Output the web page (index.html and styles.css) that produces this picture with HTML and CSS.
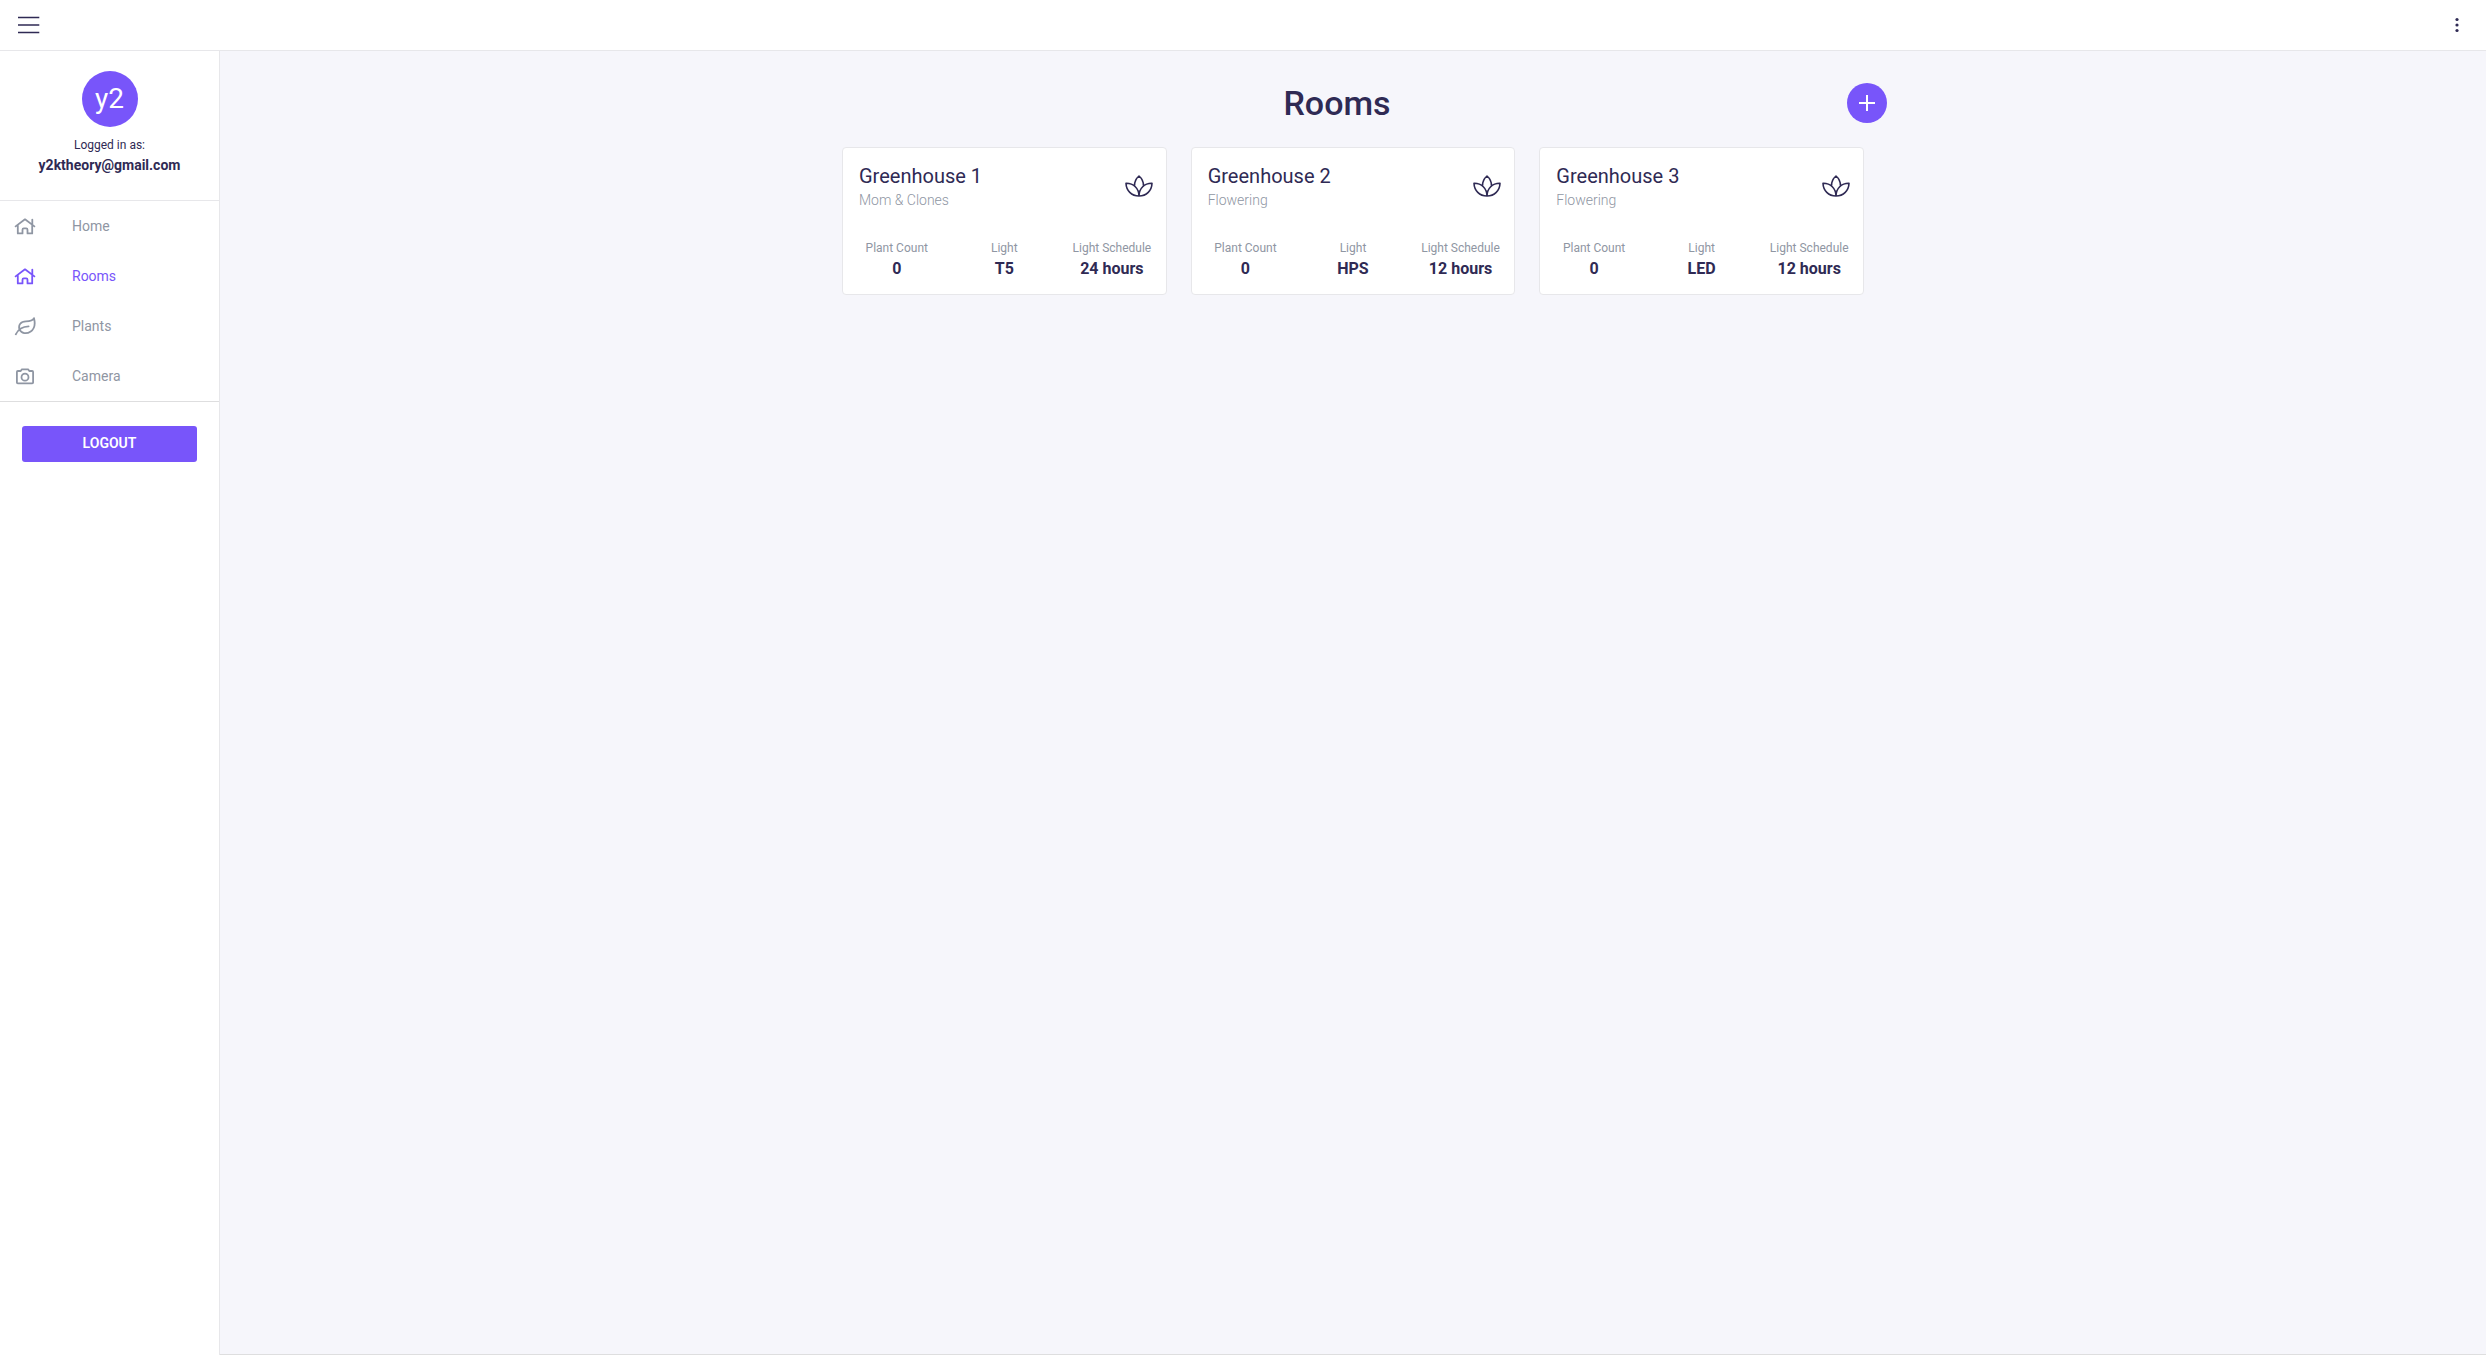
FILE: index.html
```html
<!DOCTYPE html>
<html lang="en">
<head>
<meta charset="utf-8">
<meta name="viewport" content="width=device-width, initial-scale=1">
<title>Rooms</title>
<link rel="stylesheet" href="styles.css">
</head>
<body>
<svg class="sprite" aria-hidden="true">
  <symbol id="home" viewBox="0 0 24 24">
    <path d="M2.600 12.400 12 5.300l9.400 7.100M4.800 11.200v8.200h4.700v-3.600c0-.9.500-1.400 1.300-1.400h2.400c.8 0 1.300.5 1.300 1.400v3.600h4.700v-8.200M19.300 5.600v5"/>
  </symbol>
  <symbol id="leaf" viewBox="0 0 24 24">
    <path d="M2.800 20.300C5 15.600 8.600 12.500 15.600 12.300M6.400 15.300C5.200 11 7.600 7.400 13 7.400c3.800 0 6.600-.4 8-3.300 1.600 6.400.5 10.700-3.300 13.300-4.200 2.900-9.300 2.100-11.300-2.100z"/>
  </symbol>
  <symbol id="camera" viewBox="0 0 24 24">
    <path d="M4.800 7h2.900l1.200-1.700h6.200L16.300 7h2.900q.9 0 .9.900v10.600q0 .9-.9.900H4.800q-.9 0-.9-.9V7.900q0-.9.900-.9z"/>
    <circle cx="12" cy="13.200" r="3.500"/>
  </symbol>
  <symbol id="lotus" viewBox="0 0 28 22">
    <path d="M9.600 10.600C9.500 6.700 11.300 3.300 14 1c2.700 2.300 4.500 5.700 4.400 9.600M1 8.300C1.200 15.600 6.500 21 14 21 14 13.500 8.500 8.100 1 8.300zM27 8.300C26.800 15.600 21.500 21 14 21 14 13.500 19.500 8.100 27 8.300z"/>
  </symbol>
</svg>

<header class="topbar">
  <button class="icon-button" type="button" aria-label="Toggle menu">
    <svg class="menu-icon" viewBox="0 0 22 18"><path d="M0 1.500h21.300M0 9h21.300M0 16.500h21.300"/></svg>
  </button>
  <button class="icon-button" type="button" aria-label="More options">
    <svg class="dots-icon" viewBox="0 0 4 16"><circle cx="2" cy="2.500" r="1.600"/><circle cx="2" cy="8" r="1.600"/><circle cx="2" cy="13.500" r="1.600"/></svg>
  </button>
</header>

<div class="shell">
  <aside class="sidebar">
    <div class="profile">
      <div class="avatar">y2</div>
      <p class="profile-label">Logged in as:</p>
      <p class="profile-email">y2ktheory@gmail.com</p>
    </div>
    <nav class="nav">
      <a class="nav-link" href="#home"><svg class="nav-icon"><use href="#home"/></svg>Home</a>
      <a class="nav-link active" href="#rooms" aria-current="page"><svg class="nav-icon"><use href="#home"/></svg>Rooms</a>
      <a class="nav-link" href="#plants"><svg class="nav-icon"><use href="#leaf"/></svg>Plants</a>
      <a class="nav-link" href="#camera"><svg class="nav-icon"><use href="#camera"/></svg>Camera</a>
    </nav>
    <button class="logout" type="button">LOGOUT</button>
  </aside>

  <main class="main">
    <div class="content">
      <div class="title-row">
        <h1 class="title">Rooms</h1>
        <button class="add" type="button" aria-label="Add room">
          <svg class="add-icon" viewBox="0 0 16 16"><path d="M8 0v16M0 8h16"/></svg>
        </button>
      </div>
      <div class="cards">
        <article class="card">
          <div class="card-head">
            <div><h2 class="card-title">Greenhouse 1</h2><p class="card-stage">Mom &amp; Clones</p></div>
            <svg class="lotus"><use href="#lotus"/></svg>
          </div>
          <dl class="stats">
            <div class="stat"><dt>Plant Count</dt><dd>0</dd></div>
            <div class="stat"><dt>Light</dt><dd>T5</dd></div>
            <div class="stat"><dt>Light Schedule</dt><dd>24 hours</dd></div>
          </dl>
        </article>
        <article class="card">
          <div class="card-head">
            <div><h2 class="card-title">Greenhouse 2</h2><p class="card-stage">Flowering</p></div>
            <svg class="lotus"><use href="#lotus"/></svg>
          </div>
          <dl class="stats">
            <div class="stat"><dt>Plant Count</dt><dd>0</dd></div>
            <div class="stat"><dt>Light</dt><dd>HPS</dd></div>
            <div class="stat"><dt>Light Schedule</dt><dd>12 hours</dd></div>
          </dl>
        </article>
        <article class="card">
          <div class="card-head">
            <div><h2 class="card-title">Greenhouse 3</h2><p class="card-stage">Flowering</p></div>
            <svg class="lotus"><use href="#lotus"/></svg>
          </div>
          <dl class="stats">
            <div class="stat"><dt>Plant Count</dt><dd>0</dd></div>
            <div class="stat"><dt>Light</dt><dd>LED</dd></div>
            <div class="stat"><dt>Light Schedule</dt><dd>12 hours</dd></div>
          </dl>
        </article>
      </div>
    </div>
  </main>
</div>
</body>
</html>
```
FILE: styles.css
```css
:root {
  --ink: #2f2a54;
  --muted: #8f96a3;
  --accent: #7855fa;
  --line: #e7e7ea;
  --canvas: #f6f6fb;
}

* { box-sizing: border-box; }

body {
  margin: 0;
  min-height: 100vh;
  display: flex;
  flex-direction: column;
  background: #fff;
  color: var(--ink);
  font-family: Roboto, "Liberation Sans", sans-serif;
  font-size: 14px;
  line-height: 20px;
}

h1, h2, p, dl, dd { margin: 0; }

button {
  padding: 0;
  border: 0;
  background: none;
  color: inherit;
  font: inherit;
  cursor: pointer;
}

svg {
  display: block;
  fill: none;
  stroke: currentColor;
}

.sprite { display: none; }

.topbar {
  display: flex;
  align-items: center;
  justify-content: space-between;
  height: 51px;
  padding: 0 8px;
  border-bottom: 1px solid var(--line);
}

.icon-button {
  display: grid;
  place-items: center;
  width: 42px;
  height: 50px;
}

.menu-icon { width: 22px; height: 18px; stroke-width: 1.7; }
.dots-icon { width: 4px; height: 16px; fill: currentColor; stroke: none; }

.shell { display: flex; flex: 1; }

.sidebar {
  flex: none;
  width: 220px;
  border-right: 1px solid var(--line);
}

.profile {
  padding: 20px 0 25px;
  border-bottom: 1px solid var(--line);
  text-align: center;
}

.avatar {
  width: 56px;
  margin: 0 auto 8px;
  border-radius: 50%;
  background: var(--accent);
  color: #fff;
  font-size: 28px;
  line-height: 56px;
}

.profile-label { font-size: 12px; }
.profile-email { font-weight: 700; }

.nav { border-bottom: 1px solid #dededf; }

.nav-link {
  display: flex;
  align-items: center;
  gap: 35px;
  height: 50px;
  padding-left: 13px;
  color: var(--muted);
  text-decoration: none;
}

.nav-link.active { color: var(--accent); }

.nav-icon {
  width: 24px;
  height: 24px;
  stroke-width: 1.8;
  stroke-linejoin: round;
  stroke-linecap: round;
}

.logout {
  display: block;
  width: 80%;
  height: 36px;
  margin: 24px auto;
  padding-bottom: 2px;
  border-radius: 3px;
  background: var(--accent);
  color: #fff;
  font-weight: 600;
}

.main {
  flex: 1;
  min-width: 0;
  background: var(--canvas);
  border-bottom: 1px solid #dededf;
}

.content {
  max-width: 1068px;
  margin: 0 auto;
  padding: 32px 0;
}

.title-row {
  display: flex;
  align-items: center;
  margin-bottom: 24px;
  padding-left: 8px;
}

.title {
  flex: 1;
  font-size: 34px;
  font-weight: 500;
  line-height: 40px;
  text-align: center;
}

.add {
  display: grid;
  place-items: center;
  width: 40px;
  height: 40px;
  border-radius: 50%;
  background: var(--accent);
  color: #fff;
}

.add-icon { width: 16px; height: 16px; stroke-width: 2; }

.cards {
  display: grid;
  grid-template-columns: repeat(auto-fit, minmax(300px, 1fr));
  gap: 24px;
  padding: 0 23px;
}

.card {
  padding: 16px 0 14px;
  border: 1px solid var(--line);
  border-radius: 4px;
  background: #fff;
}

.card-head {
  display: flex;
  justify-content: space-between;
  padding: 0 13px 0 16px;
}

.card-title {
  font-size: 20px;
  font-weight: 400;
  line-height: 24px;
}

.card-stage { color: var(--muted); font-weight: 300; line-height: 24px; }

.lotus { width: 28px; height: 22px; margin-top: 11px; stroke-width: 1.6; stroke-linejoin: round; }

.stats {
  display: grid;
  grid-template-columns: repeat(3, 1fr);
  margin-top: 26px;
  text-align: center;
}

.stat dt { color: var(--muted); font-size: 12px; line-height: 20px; }
.stat dd { font-size: 16px; font-weight: 700; line-height: 22px; }
```
